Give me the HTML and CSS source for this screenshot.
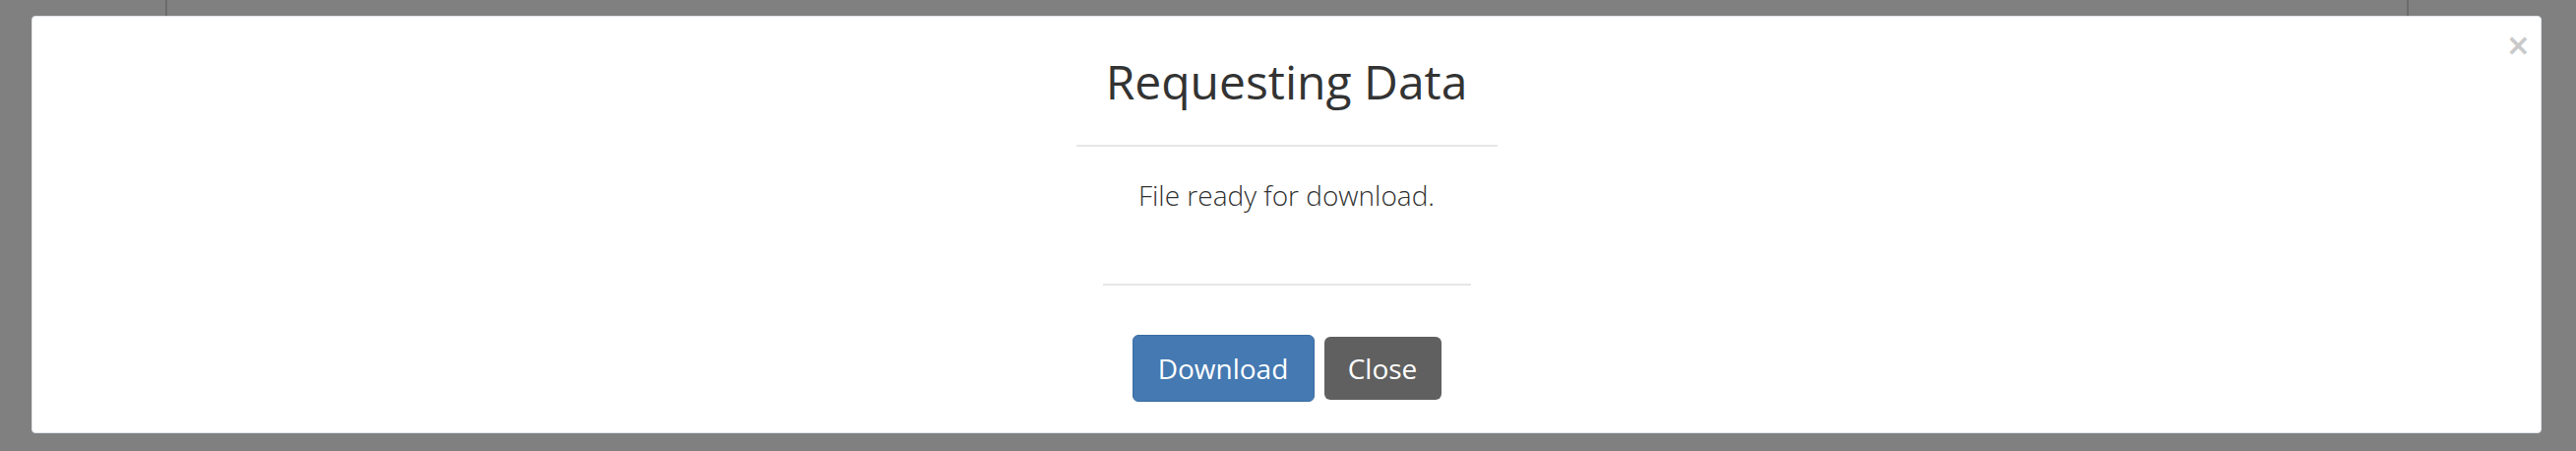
FILE: index.html
```html
<!DOCTYPE html>
<html>
<head>
<meta charset="utf-8">
<link rel="stylesheet" href="styles.css">
</head>
<body>
<div class="backdrop">
  <div class="page-lines"><span class="vline vline-left"></span><span class="vline vline-right"></span></div>
  <div class="modal">
    <button class="close-x" aria-label="Close">&times;</button>
    <h1 class="title">Requesting Data</h1>
    <hr class="rule rule-top">
    <p class="message">File ready for download.</p>
    <hr class="rule rule-bottom">
    <div class="actions">
      <button class="btn btn-primary">Download</button>
      <button class="btn btn-secondary">Close</button>
    </div>
  </div>
</div>
</body>
</html>
```

FILE: styles.css
```css
html, body {
  margin: 0;
  padding: 0;
  height: 100%;
}
body {
  background: #808080;
  font-family: "Open Sans", "Liberation Sans", sans-serif;
  overflow: hidden;
}
.backdrop {
  position: relative;
  height: 458px;
  padding: 16px 35px 0 32px;
  box-sizing: border-box;
}
.page-lines {
  position: absolute;
  left: 0;
  top: 0;
  width: 100%;
  height: 16px;
}
.vline {
  position: absolute;
  top: 0;
  width: 2px;
  height: 16px;
  background: #6c6c6c;
}
.vline-left { left: 168px; }
.vline-right { left: 2446px; }
.modal {
  position: relative;
  height: 424px;
  box-sizing: border-box;
  background: #fff;
  border: 1px solid #dfe3e9;
  border-radius: 4px;
  padding-top: 36px;
  display: flex;
  flex-direction: column;
  align-items: center;
}
.close-x {
  position: absolute;
  top: 14px;
  right: 10px;
  border: 0;
  background: none;
  padding: 0;
  font-family: "DejaVu Sans", sans-serif;
  font-weight: bold;
  font-size: 30px;
  line-height: 30px;
  color: #c9c9c9;
}
.title {
  margin: 0;
  font-size: 48px;
  font-weight: 400;
  line-height: 60px;
  color: #333;
}
.rule {
  border: 0;
  height: 2px;
  background: #e6e6e6;
  margin: 0;
}
.rule-top {
  width: 428px;
  margin-top: 34px;
}
.message {
  margin: 29px 0 0;
  font-size: 28px;
  font-weight: 300;
  line-height: 40px;
  color: #333;
}
.rule-bottom {
  width: 374px;
  margin-top: 70px;
}
.actions {
  margin-top: 50px;
  display: flex;
  align-items: center;
  gap: 10px;
}
.btn {
  font-family: "Open Sans", "Liberation Sans", sans-serif;
  font-size: 28px;
  color: #fff;
  border-radius: 6px;
  box-sizing: border-box;
  cursor: pointer;
}
.btn-primary {
  height: 68px;
  width: 185px;
  background: #4479b2;
  border: 1px solid #3a6ca3;
}
.btn-secondary {
  height: 64px;
  width: 119px;
  background: #606060;
  border: 0;
}
```
